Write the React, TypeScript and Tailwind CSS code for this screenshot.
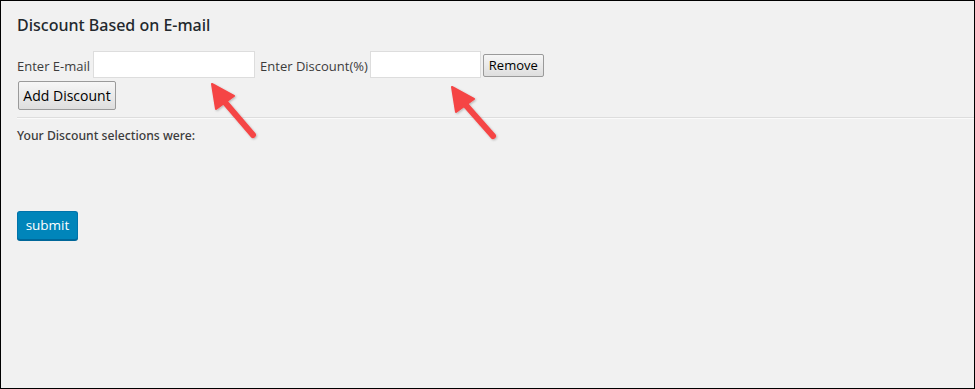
export default function App() {
  return (
    <div
      className="relative w-[975px] h-[389px] border border-black bg-[#f1f1f1] text-[#23282d]"
      style={{ fontFamily: '"Open Sans", "Noto Sans", sans-serif' }}
    >
      <div className="pl-4 pr-0">
        <h2
          className="pt-[12px] text-[16px] leading-[24px] font-medium text-[#23282d]"
          style={{ fontFamily: '"Noto Sans", "Open Sans", sans-serif' }}
        >
          Discount Based on E-mail
        </h2>

        <div className="mt-[14px] flex items-center text-[13px] text-[#3c3c3c]">
          <span className="mt-[4px]">Enter E-mail</span>
          <input
            type="text"
            className="ml-[3px] w-[162px] h-[27px] bg-white border border-[#ddd] outline-none"
          />
          <span className="ml-[5px] mt-[4px]">Enter Discount(%)</span>
          <input
            type="text"
            className="ml-[2px] w-[111px] h-[27px] bg-white border border-[#ddd] outline-none"
          />
          <button className="ml-[2px] mt-[1px] w-[61px] h-[23px] text-[13px] leading-none text-black border border-[#9a9a9a] rounded-[2px] bg-gradient-to-b from-[#f6f6f6] to-[#dedede]">
            Remove
          </button>
        </div>

        <button className="mt-[3px] ml-[1px] w-[98px] h-[29px] text-[14px] leading-none text-black border border-[#9a9a9a] rounded-[2px] bg-gradient-to-b from-[#f6f6f6] to-[#dedede]">
          Add Discount
        </button>
      </div>

      <div className="mt-[7px] ml-4 border-t border-[#dddddd] border-b border-b-[#fafafa]" />

      <div className="pl-4">
        <p
          className="mt-[8px] text-[12.2px] leading-[18px] font-medium text-[#3c3c3c]"
          style={{ fontFamily: '"Noto Sans", "Open Sans", sans-serif' }}
        >
          Your Discount selections were:
        </p>
        <button className="mt-[66px] w-[61px] h-[29px] rounded-[3px] bg-[#0085ba] border border-[#0073aa] border-b-[#006799] text-white text-[13.5px] leading-none shadow-[0_1px_0_#006799]">
          submit
        </button>
      </div>

      <svg
        className="absolute left-0 top-0 pointer-events-none"
        width="975"
        height="389"
        viewBox="0 0 975 389"
      >
        <defs>
          <filter id="sh" x="-20%" y="-20%" width="140%" height="140%">
            <feDropShadow dx="1" dy="1" stdDeviation="1" floodColor="#000" floodOpacity="0.25" />
          </filter>
        </defs>
        <g fill="#f54545" stroke="#f54545" filter="url(#sh)">
          <line x1="252" y1="134" x2="222" y2="99" strokeWidth="6" strokeLinecap="round" />
          <polygon points="211,83 233,95 215,108" strokeWidth="2" strokeLinejoin="round" />
          <line x1="492" y1="135" x2="462" y2="101" strokeWidth="6" strokeLinecap="round" />
          <polygon points="451,86 473,98 455,111" strokeWidth="2" strokeLinejoin="round" />
        </g>
      </svg>
    </div>
  );
}
